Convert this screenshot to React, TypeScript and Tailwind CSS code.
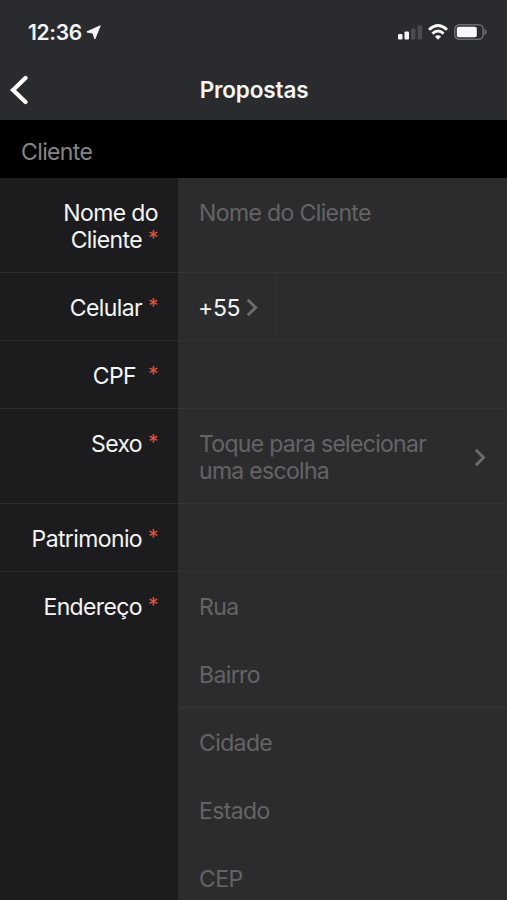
import type { ReactNode } from "react";

function Label({ first, last, wide = false }: { first?: string; last: string; wide?: boolean }) {
  return (
    <div className="flex w-[178px] shrink-0 flex-col items-end pt-[22px] pr-[20px] text-[#f4f4f5]">
      {first && <div>{first}</div>}
      <div className={wide ? "flex justify-end gap-[12px]" : "flex justify-end gap-[6px]"}>
        <span>{last}</span>
        <span className="-mt-[2px] w-[10px] text-center text-[21px] tracking-normal text-[#e0533f]">*</span>
      </div>
    </div>
  );
}

function Row({ label, height, children }: { label: ReactNode; height: string; children?: ReactNode }) {
  return (
    <div className={`flex shrink-0 ${height}`}>
      <div className="flex border-b border-[#2a2a2c] bg-[#1c1c1e]">{label}</div>
      <div className="flex min-w-0 flex-1 border-b border-[#323234] bg-[#2c2c2e] text-[#646466]">{children}</div>
    </div>
  );
}

function Chevron({ className }: { className: string }) {
  return (
    <svg viewBox="0 0 12 19" className={className} fill="none" stroke="#6b6b6d" strokeWidth="3">
      <path d="M1.8 1.8 9.6 9.5 1.8 17.2" />
    </svg>
  );
}

function StatusBar() {
  return (
    <div className="flex h-[62px] items-center pt-[2px] pl-[28px] text-[21px] font-semibold text-[#f5f5f7]">
      <span className="w-[58px] tracking-[-0.3px]">12:36</span>
      <svg viewBox="0 0 15 15" className="h-[15px] w-[15px]" fill="#f5f5f7" stroke="#f5f5f7" strokeWidth="1" strokeLinejoin="round">
        <path d="M14.2.8 8.8 14 7 8.2.8 6.9Z" />
      </svg>
      <svg viewBox="0 0 24 16" className="ml-auto h-[16px] w-[24px]">
        <rect x="0" y="10" width="4.5" height="5.5" rx="1" fill="#f5f5f7" />
        <rect x="6.5" y="7.5" width="4.5" height="8" rx="1" fill="#f5f5f7" />
        <rect x="13" y="4.5" width="4.5" height="11" rx="1" fill="#4b4c50" />
        <rect x="19.5" y="1.5" width="4.5" height="14" rx="1" fill="#4b4c50" />
      </svg>
      <svg viewBox="0 0 20 16" className="ml-[6px] h-[16px] w-[20px]" fill="none" stroke="#f5f5f7" strokeWidth="2.9">
        <path d="M1 5.7Q10-2.5 19 5.7" />
        <path d="M4.4 9.6Q10 4.4 15.6 9.6" />
        <path d="m10 15.8-3.1-3.3q3.1-2.6 6.2 0Z" fill="#f5f5f7" stroke="none" />
      </svg>
      <svg viewBox="0 0 34 16" className="mr-[19px] ml-[6px] h-[16px] w-[34px]">
        <rect x=".8" y=".8" width="28.4" height="14.4" rx="4.5" fill="none" stroke="#6c6d70" strokeWidth="1.5" />
        <rect x="2.8" y="2.8" width="20" height="10.4" rx="2" fill="#f8f8fa" />
        <path d="M30.5 4.5q4.5 3.5 0 7Z" fill="#6c6d70" />
      </svg>
    </div>
  );
}

export default function App() {
  return (
    <div className="flex h-[900px] w-[507px] flex-col overflow-hidden bg-[#1c1c1e] font-['Inter','Liberation_Sans',sans-serif] text-[23px] leading-[27px] tracking-[-0.62px]">
      <header className="h-[120px] shrink-0 bg-[#2a2b2e]">
        <StatusBar />
        <div className="grid h-[56px] grid-cols-[100px_1fr_100px] items-center">
          <svg viewBox="0 0 18 30" className="ml-[10px] h-[30px] w-[18px]" fill="none" stroke="#fff" strokeWidth="4.2" strokeLinecap="round">
            <path d="M15.5 3 3 15 15.5 27" />
          </svg>
          <h1 className="pb-[2px] pl-px text-center text-[22.5px] font-semibold tracking-[-0.15px] text-[#f5f5f7]">Propostas</h1>
        </div>
      </header>
      <div className="flex h-[58px] shrink-0 items-center bg-black pt-[7px] pl-[21px] text-[#858587]">Cliente</div>
      <Row label={<Label first="Nome do" last="Cliente" />} height="h-[95px]">
        <span className="pt-[22px] pl-[21px]">Nome do Cliente</span>
      </Row>
      <Row label={<Label last="Celular" />} height="h-[68px]">
        <div className="flex w-[98px] border-r border-[#303032] pt-[22px] pl-[20px] text-[#f4f4f5]">
          <span className="w-[48px] tracking-[-0.3px]">+55</span>
          <Chevron className="mt-[3px] h-[19px] w-[12px]" />
        </div>
      </Row>
      <Row label={<Label last="CPF" wide />} height="h-[68px]" />
      <Row label={<Label last="Sexo" />} height="h-[95px]">
        <div className="flex flex-1 items-start pt-[22px] pr-[21px] pl-[21px]">
          <span className="flex-1 tracking-[-0.7px]">Toque para selecionar<br />uma escolha</span>
          <Chevron className="mt-[17px] h-[19px] w-[12px]" />
        </div>
      </Row>
      <Row label={<Label last="Patrimonio" />} height="h-[68px]" />
      <div className="flex h-[328px] shrink-0">
        <Label last="Endereço" />
        <div className="flex-1 bg-[#2c2c2e] text-[#646466]">
          <div className="h-[68px] pt-[22px] pl-[21px]">Rua</div>
          <div className="h-[69px] border-b-3 border-[#313133] pt-[22px] pl-[21px]">Bairro</div>
          <div className="h-[67px] border-b border-[#2e2e30] pt-[21px] pl-[21px]">Cidade</div>
          <div className="h-[68px] pt-[22px] pl-[21px]">Estado</div>
          <div className="pt-[22px] pl-[21px]">CEP</div>
        </div>
      </div>
    </div>
  );
}
